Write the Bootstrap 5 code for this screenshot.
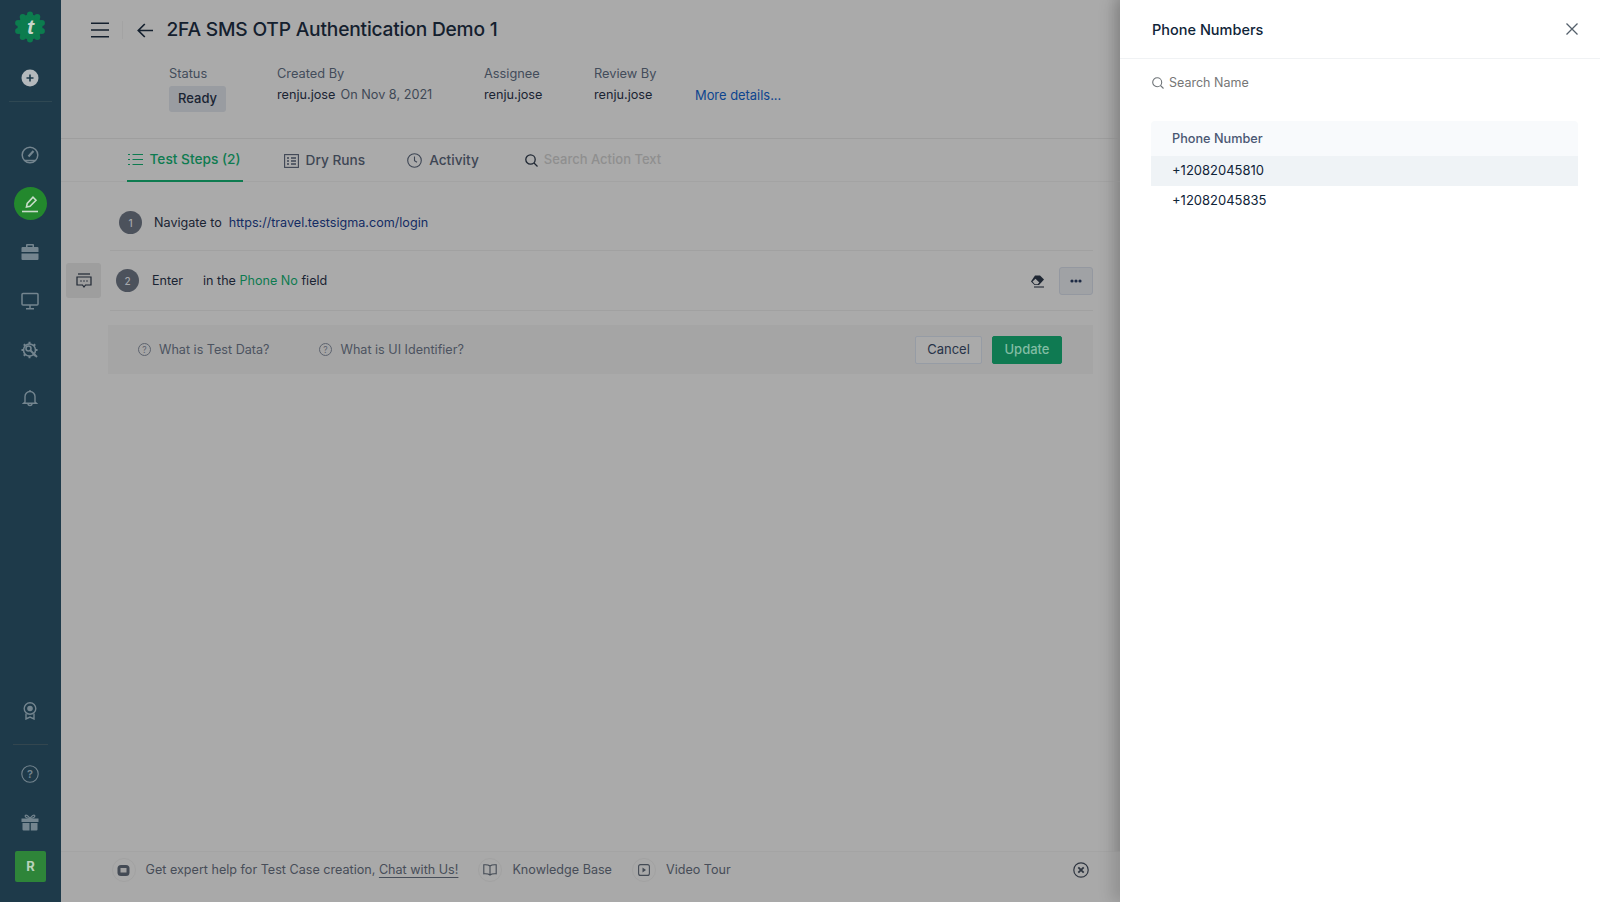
<!DOCTYPE html>
<html lang="en">
<head>
<meta charset="utf-8">
<title>2FA SMS OTP Authentication Demo 1</title>
<link rel="stylesheet" href="https://cdn.jsdelivr.net/npm/bootstrap@5.3.0/dist/css/bootstrap.min.css">
<style>
html,body{height:902px;overflow:hidden}
body{font-family:Inter,"Liberation Sans",sans-serif;font-size:13px;background:#aaaaaa;color:#1a2433;line-height:1.2}
svg{display:block;flex:none}
.shell{height:902px}
.rail{width:60.5px;background:#1e3a4a;color:#74858f;flex:none}
.rail-slot{height:48.6px;width:100%}
.rail-logo{height:54px}
.rail-plus{height:47px}
.rail-sep{height:1px;background:#2f4853;margin:0 9px 29px}
.rail-sep2{height:1px;background:#33464f;margin:9px 13px 5px}
.rail-active{width:33px;height:33px;border-radius:50%;background:#23882d}
.rail-user{width:31px;height:31px;background:#2e8539;border-radius:2px;color:#b9d3bc;font-weight:700;font-size:13px;margin:4px 0 20px 15px}
.stage{width:1059.5px;flex:none;position:relative;box-shadow:inset -14px 0 12px -12px rgba(0,0,0,.12)}
.head{height:58px;padding:2px 0 0 30px}
.head-rule{width:1px;height:18px;background:#a3a3a3;margin:0 14px 0 13px}
.head-title{font-size:19.2px;font-weight:500;color:#14202e;margin:0 0 0 14px;letter-spacing:-.2px}
.meta{height:81px;padding-left:108.500px;border-bottom:1px solid #9e9e9e;align-items:flex-start}
.meta-label{color:#434c5a;font-size:12.800px;line-height:16px;margin-top:8px}
.meta-value{color:#1a2433;font-size:12.700px;line-height:16px;margin-top:5px}
.meta-sub{color:#3f4855;margin-left:5px}
.meta-col1{width:108px}
.meta-col2{width:207px}
.meta-col3{width:110px}
.meta-col4{width:101px}
.state-pill{background:#999ca1;color:#1a2433;font-size:13px;font-weight:500;width:57px;height:26px;border-radius:3px;margin-top:4px}
.more-link{color:#0e458f;text-decoration:none;font-size:12.900px;margin-top:30px}
.tabbar{height:43px;padding-left:66px;border-bottom:1px solid #a3a3a3}
.tabitem{height:43px;color:#3e4654;font-size:13.700px;font-weight:500;gap:7px;text-decoration:none}
.tabitem-on{color:#0e7b50;border-bottom:2px solid #0e7b50;padding:0 2px 0 1px}
.tab-gap1{margin-left:41px}
.tab-gap2{margin-left:42px}
.tab-gap3{margin-left:46px}
.tabsearch{gap:6px;color:#8f8f8f;font-size:13px;font-weight:500}
.steps{margin-left:49.500px;width:983px;position:relative;font-size:12.600px}
.stepline{border-bottom:1px solid #a1a1a1}
.stepline1{height:69px;padding:13px 0 0 9px}
.stepline2{height:60px;padding-left:6px;position:relative}
.stepnum{width:23px;height:23px;border-radius:50%;background:#4c525c;color:#a5a8ac;font-size:10px;font-weight:500;flex:none}
.step-link{color:#142c63}
.step-field{color:#0e7b50}
.step-enter{margin-left:13px;width:51px}
.note-btn{position:absolute;left:-44px;top:12px;width:35px;height:35px;background:#9e9e9e;border-radius:3px;color:#1f2733}
.dots-btn{width:34px;height:28px;background:#a0a2a5;border:1px solid #9498a0;border-radius:3px;color:#1d2a44;padding:0}
.eraser{margin-left:auto;margin-right:14px}
.helpbox{height:49px;margin:14px 0 0 -2px;width:985px;background:#a5a5a5;padding:0 31px 0 30px;color:#4c5360}
.help-b{margin-left:50px}
.btn-cancel{width:67px;height:28px;background:#aaaaaa;border:1px solid #969ca5;border-radius:2px;color:#283348;font-size:13px;padding:0}
.btn-update{width:70px;height:28px;background:#0f7a52;border:1px solid #0f7a52;border-radius:2px;color:#82bda4;font-size:13px;padding:0;font-weight:500;margin-left:10px}
.footerbar{position:absolute;left:0;right:0;bottom:0;height:51px;background:#a9a9a9;border-top:1px solid #a4a4a4;padding:0 31px 14px 51px;color:#474d58;font-size:12.600px}
.footround{width:24px;height:24px;border-radius:50%;border:1px solid #a2a2a2;color:#444b55;flex:none}
.footerbar u{text-underline-offset:3px}
.foot-gap{margin-left:20px}
.foot-label{margin-left:10px}
.drawer{width:480px;flex:none;background:#fff;box-shadow:-8px 0 14px rgba(0,0,0,.14);position:relative;color:#0f2438}
.drawer-head{height:59px;padding:2px 22px 0 32px;border-bottom:1px solid #f0f2f4}
.drawer-title{font-size:14.500px;font-weight:500;color:#0f2438;margin:0}
.drawer-close{margin-top:-2px}
.drawer-search{height:47px;padding-left:32px;gap:5px;color:#767676;font-size:12.500px}
.phone-table{margin:15px 22px 0 31px;width:427px;font-size:13px;--bs-table-bg:transparent;border-collapse:separate;border-spacing:0}
.phone-table th{background:#f8fafc;height:35px;padding:0 0 0 21px;font-weight:500;font-size:12.700px;color:#4a5773;border:0;border-radius:4px 4px 0 0;vertical-align:middle}
.phone-table td{height:30px;padding:0 0 0 21px;border:0;color:#0f2438;vertical-align:middle}
.phone-table tr.row-on td{background:#eff3f6}
</style>
</head>
<body>
<div class="shell d-flex">
  <aside class="rail d-flex flex-column">
    <div class="rail-logo d-flex align-items-center justify-content-center">
      <svg width="32" height="32" viewBox="0 0 32 32"><g fill="#0c7c4e"><circle cx="16" cy="16" r="12.500"/><circle cx="16" cy="3.500" r="3"/><circle cx="23.300" cy="5.900" r="3"/><circle cx="27.900" cy="12.100" r="3"/><circle cx="27.900" cy="19.900" r="3"/><circle cx="23.300" cy="26.100" r="3"/><circle cx="16" cy="28.500" r="3"/><circle cx="8.700" cy="26.100" r="3"/><circle cx="4.100" cy="19.900" r="3"/><circle cx="4.100" cy="12.100" r="3"/><circle cx="8.700" cy="5.900" r="3"/></g><text x="16.500" y="23" text-anchor="middle" font-family="Liberation Sans,sans-serif" font-style="italic" font-weight="700" font-size="21" fill="#c9d6cc">t</text></svg>
    </div>
    <div class="rail-plus d-flex align-items-center justify-content-center">
      <svg width="18" height="18" viewBox="0 0 18 18"><circle cx="9" cy="9" r="8.500" fill="#b4b9bc"/><path d="M9 5.500v7M5.500 9h7" stroke="#1e3a4a" stroke-width="1.600"/></svg>
    </div>
    <div class="rail-sep"></div>
    <div class="rail-slot d-flex align-items-center justify-content-center">
      <svg width="18" height="18" viewBox="0 0 18 18" fill="none" stroke="#74858f" stroke-width="1.500"><circle cx="9" cy="9" r="7.800"/><path d="M7.500 10.500L12.500 5" stroke-width="2.200"/><path d="M4 14.500h10"/></svg>
    </div>
    <div class="rail-slot d-flex align-items-center justify-content-center">
      <div class="rail-active d-flex align-items-center justify-content-center">
        <svg width="18" height="18" viewBox="0 0 18 18" fill="none" stroke="#c8dcc9" stroke-width="1.600"><path d="M5.500 12l.7-3.500L12 2.200l3 3-6 6z"/><path d="M1 16.500h16" stroke-width="1.600"/></svg>
      </div>
    </div>
    <div class="rail-slot d-flex align-items-center justify-content-center">
      <svg width="18" height="18" viewBox="0 0 18 18"><path fill="#74858f" d="M6 1h6a1 1 0 0 1 1 1V4h3.500a1 1 0 0 1 1 1v4H.5V5a1 1 0 0 1 1-1H5V2a1 1 0 0 1 1-1zM6.500 2.500V4h5V2.500zM.5 10.500h17V16a1 1 0 0 1-1 1h-15a1 1 0 0 1-1-1z"/></svg>
    </div>
    <div class="rail-slot d-flex align-items-center justify-content-center">
      <svg width="18" height="18" viewBox="0 0 18 18" fill="none" stroke="#74858f" stroke-width="1.500"><rect x="1" y="1.500" width="16" height="11.500" rx="1"/><path d="M9 13v3.500M5 16.800h8"/></svg>
    </div>
    <div class="rail-slot d-flex align-items-center justify-content-center">
      <svg width="18" height="18" viewBox="0 0 18 18" fill="none" stroke="#74858f" stroke-width="1.600"><circle cx="8.500" cy="9" r="6"/><path d="M8.500 .8v2.200M8.500 15v2.200M.5 9h2M14.500 9h2M2.800 3.300l1.500 1.500M12.700 13.200l1.500 1.500M14.200 3.300l-1.500 1.500M2.800 14.700l1.500-1.500" stroke-width="2"/><circle cx="7.500" cy="7.500" r="2.500"/><path d="M9.500 9.500l6.500 6.500" stroke-width="2"/></svg>
    </div>
    <div class="rail-slot d-flex align-items-center justify-content-center">
      <svg width="16" height="18" viewBox="0 0 16 18" fill="none" stroke="#74858f" stroke-width="1.400"><path d="M8 1v1.500M3 13V7.500a5 5 0 0 1 10 0V13l1.500 1.300h-13zM6 14.500a2 2 0 0 0 4 0"/></svg>
    </div>
    <div class="mt-auto">
      <div class="rail-slot d-flex align-items-center justify-content-center">
        <svg width="14" height="18" viewBox="0 0 14 18" fill="none" stroke="#74858f" stroke-width="1.400"><circle cx="7" cy="6.500" r="5.800"/><circle cx="7" cy="6.500" r="2.800" fill="#74858f" stroke="none"/><path d="M3 11.500V17l4-2 4 2v-5.500"/></svg>
      </div>
      <div class="rail-sep2"></div>
      <div class="rail-slot d-flex align-items-center justify-content-center">
        <svg width="18" height="18" viewBox="0 0 18 18" fill="none" stroke="#74858f" stroke-width="1.100"><circle cx="9" cy="9" r="8.200"/><text x="9" y="13" text-anchor="middle" font-family="Inter,sans-serif" font-size="11" font-weight="600" fill="#74858f" stroke="none">?</text></svg>
      </div>
      <div class="rail-slot d-flex align-items-center justify-content-center">
        <svg width="18" height="17" viewBox="0 0 18 17" fill="#74858f"><path d="M.5 4.500h17V8H.5zM1.500 9h7v7.500h-6a1 1 0 0 1-1-1zM9.800 9h6.700v6.500a1 1 0 0 1-1 1H9.800z"/><path d="M9 4.500C7 1.500 5 .5 4.300 1.500 3.600 2.700 6 4.500 9 4.500zM9 4.500c2-3 4-4 4.700-3 .7 1.200-1.700 3-4.700 3z" fill="none" stroke="#74858f" stroke-width="1.200"/></svg>
      </div>
      <div class="rail-user d-flex align-items-center justify-content-center">R</div>
    </div>
  </aside>

  <main class="stage d-flex flex-column">
    <header class="head d-flex align-items-center">
      <svg width="18" height="16" viewBox="0 0 18 16" fill="none" stroke="#14202e" stroke-width="1.500"><path d="M0 1.200h18M0 8h18M0 14.800h18"/></svg>
      <span class="head-rule"></span>
      <svg width="16" height="15" viewBox="0 0 16 15" fill="none" stroke="#14202e" stroke-width="1.700"><path d="M16 7.500H1.500M7.800 1L1.300 7.500 7.800 14"/></svg>
      <h1 class="head-title">2FA SMS OTP Authentication Demo 1</h1>
    </header>
    <section class="meta d-flex">
      <div class="meta-col1"><div class="meta-label">Status</div><div class="state-pill d-flex align-items-center justify-content-center">Ready</div></div>
      <div class="meta-col2"><div class="meta-label">Created By</div><div class="meta-value">renju.jose<span class="meta-sub">On Nov 8, 2021</span></div></div>
      <div class="meta-col3"><div class="meta-label">Assignee</div><div class="meta-value">renju.jose</div></div>
      <div class="meta-col4"><div class="meta-label">Review By</div><div class="meta-value">renju.jose</div></div>
      <a class="more-link" href="#">More details...</a>
    </section>
    <nav class="tabbar d-flex">
      <a class="tabitem tabitem-on d-flex align-items-center" href="#">
        <svg width="15" height="13" viewBox="0 0 15 13" fill="none" stroke="currentColor" stroke-width="1.200"><path d="M4.500 1.500H15M4.500 6.500H15M4.500 11.500H15M0 1.500h2M0 6.500h2M0 11.500h2"/></svg>Test Steps (2)</a>
      <a class="tabitem tab-gap1 d-flex align-items-center" href="#">
        <svg width="15" height="14" viewBox="0 0 15 14" fill="none" stroke="currentColor" stroke-width="1.100"><rect x=".6" y=".6" width="13.800" height="12.800"/><path d="M3 4h2M3 7h2M3 10h2M7 4h5M7 7h5M7 10h5" stroke-width="1.300"/></svg>Dry Runs</a>
      <a class="tabitem tab-gap2 d-flex align-items-center" href="#">
        <svg width="15" height="15" viewBox="0 0 15 15" fill="none" stroke="currentColor" stroke-width="1.100"><circle cx="7.500" cy="7.500" r="6.800"/><path d="M7.500 3.500v4.300l2.500 1.500"/></svg>Activity</a>
      <div class="tabsearch tab-gap3 d-flex align-items-center">
        <svg width="13" height="13" viewBox="0 0 13 13" fill="none" stroke="#1f2733" stroke-width="1.300"><circle cx="5.500" cy="5.500" r="4.700"/><path d="M9 9l3.500 3.500"/></svg>Search Action Text</div>
    </nav>
    <section class="steps">
      <div class="stepline stepline1 d-flex align-items-center">
        <span class="stepnum d-flex align-items-center justify-content-center">1</span>
        <span class="ms-2 ps-1">Navigate to&nbsp; <span class="step-link">https://travel.testsigma.com/login</span></span>
      </div>
      <div class="stepline stepline2 d-flex align-items-center">
        <button class="note-btn btn d-flex align-items-center justify-content-center p-0" type="button" aria-label="Comment">
          <svg width="16" height="16" viewBox="0 0 16 16" fill="none" stroke="currentColor" stroke-width="1.200"><path d="M2 1h12"/><path d="M1 4h14v8H9.500L8 14l-1.500-2H1z"/><path d="M4.500 8h1M7.500 8h1M10.500 8h1" stroke-width="1.400"/></svg>
        </button>
        <span class="stepnum d-flex align-items-center justify-content-center">2</span>
        <span class="step-enter">Enter</span>
        <span>in the <span class="step-field">Phone No</span> field</span>
        <svg class="eraser" width="15" height="14" viewBox="0 0 15 14"><path fill="#1f2733" d="M5 1.500h5l4 4-5 5.500H4.500L1 7.500z"/><path fill="#a9a9a9" d="M2.500 7.500l3-2.800 3.800 3.800L7.700 10.300H4.800z"/><path d="M4 13h10" stroke="#1f2733" stroke-width="1.100"/></svg>
        <button class="dots-btn btn d-flex align-items-center justify-content-center" type="button" aria-label="More">
          <svg width="12" height="4" viewBox="0 0 12 4" fill="currentColor"><circle cx="2" cy="2" r="1.600"/><circle cx="6" cy="2" r="1.600"/><circle cx="10" cy="2" r="1.600"/></svg>
        </button>
      </div>
      <div class="helpbox d-flex align-items-center">
        <svg width="13" height="13" viewBox="0 0 13 13" fill="none" stroke="#5d636e"><circle cx="6.500" cy="6.500" r="6"/><text x="6.500" y="9.500" text-anchor="middle" font-family="Inter,sans-serif" font-size="8.500" fill="#5d636e" stroke="none">?</text></svg>
        <span class="ms-2">What is Test Data?</span>
        <svg class="help-b" width="13" height="13" viewBox="0 0 13 13" fill="none" stroke="#5d636e"><circle cx="6.500" cy="6.500" r="6"/><text x="6.500" y="9.500" text-anchor="middle" font-family="Inter,sans-serif" font-size="8.500" fill="#5d636e" stroke="none">?</text></svg>
        <span class="ms-2">What is UI Identifier?</span>
        <button class="btn btn-cancel ms-auto" type="button">Cancel</button>
        <button class="btn btn-update" type="button">Update</button>
      </div>
    </section>
    <footer class="footerbar d-flex align-items-center">
      <span class="footround d-flex align-items-center justify-content-center"><svg width="13" height="13" viewBox="0 0 13 13"><rect x=".5" y="1" width="12" height="11" rx="3.500" fill="#444b55"/><rect x="3.500" y="4" width="6" height="4.500" fill="#a3a3a3"/></svg></span>
      <span class="foot-label">Get expert help for Test Case creation, <u>Chat with Us!</u></span>
      <span class="footround foot-gap d-flex align-items-center justify-content-center"><svg width="14" height="12" viewBox="0 0 14 12" fill="none" stroke="#444b55" stroke-width="1.100"><path d="M7 2C5.500.8 3 .6.800.8v9c2.200-.2 4.700 0 6.200 1.200 1.500-1.200 4-1.400 6.200-1.200v-9C11 .6 8.500.8 7 2zM7 2v9"/></svg></span>
      <span class="foot-label">Knowledge Base</span>
      <span class="footround foot-gap d-flex align-items-center justify-content-center"><svg width="12" height="12" viewBox="0 0 12 12" fill="none" stroke="#444b55" stroke-width="1.100"><rect x=".6" y=".6" width="10.800" height="10.800" rx="2"/><path d="M4.500 3.500l3.500 2.500-3.500 2.500z" fill="#444b55" stroke="none"/></svg></span>
      <span class="foot-label">Video Tour</span>
      <svg class="ms-auto" width="16" height="16" viewBox="0 0 16 16" fill="none" stroke="#2e3540"><circle cx="8" cy="8" r="7.200" stroke-width="1.200"/><path d="M5.300 5.300l5.400 5.400M10.700 5.300l-5.400 5.400" stroke-width="1.800"/></svg>
    </footer>
  </main>

  <aside class="drawer">
    <div class="drawer-head d-flex align-items-center justify-content-between">
      <h2 class="drawer-title">Phone Numbers</h2>
      <svg class="drawer-close" width="12" height="12" viewBox="0 0 12 12" fill="none" stroke="#54606b" stroke-width="1.300"><path d="M.5.500l11 11M11.500.500l-11 11"/></svg>
    </div>
    <div class="drawer-search d-flex align-items-center">
      <svg width="12" height="12" viewBox="0 0 12 12" fill="none" stroke="#6f7478" stroke-width="1.100"><circle cx="5.200" cy="5.200" r="4.500"/><path d="M8.500 8.500l3 3"/></svg>
      <span>Search Name</span>
    </div>
    <table class="table phone-table mb-0">
      <thead><tr><th>Phone Number</th></tr></thead>
      <tbody>
        <tr class="row-on"><td>+12082045810</td></tr>
        <tr><td>+12082045835</td></tr>
      </tbody>
    </table>
  </aside>
</div>
</body>
</html>
